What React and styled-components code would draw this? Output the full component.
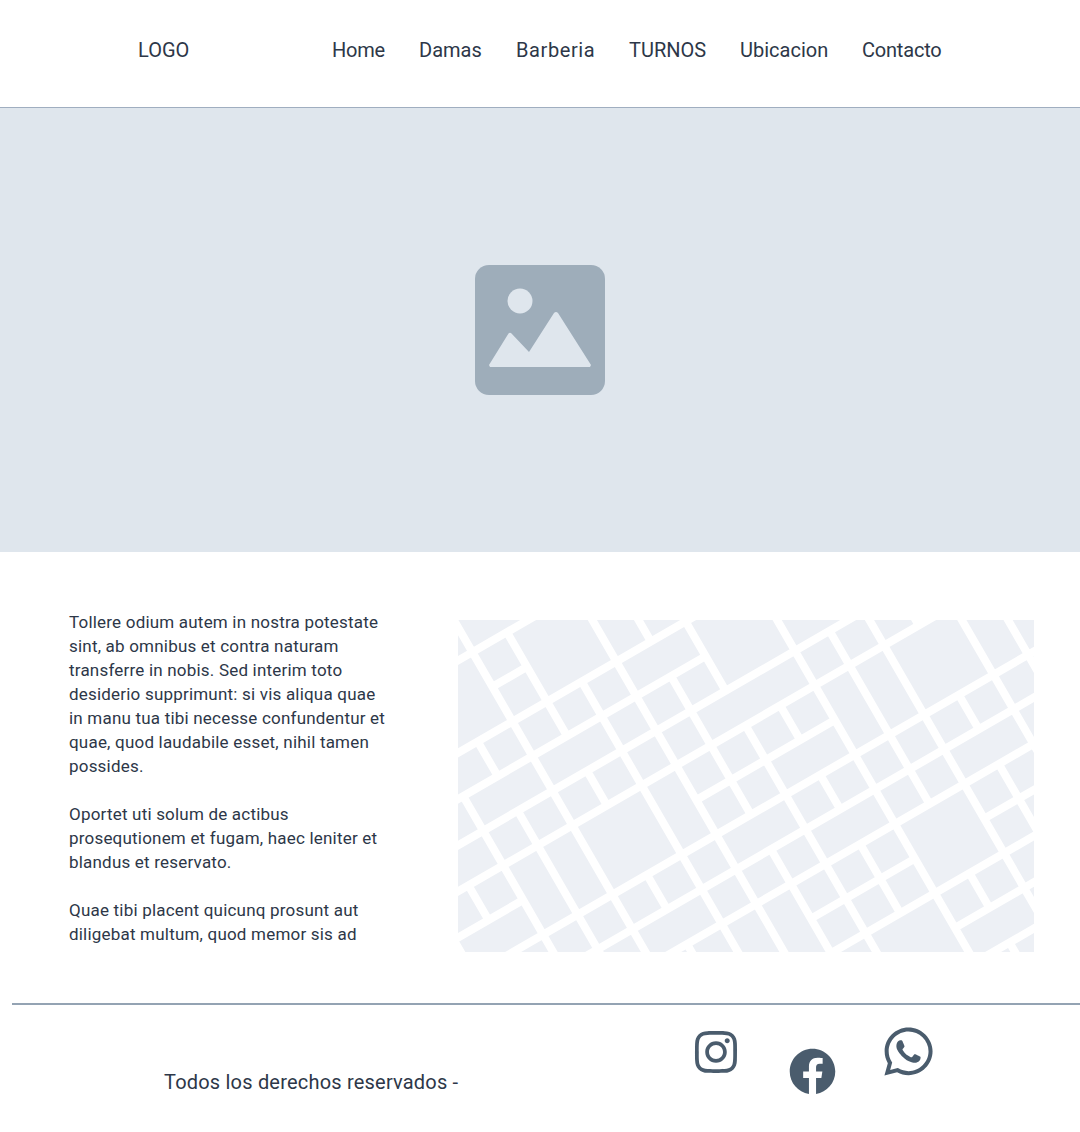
import styled, { createGlobalStyle } from "styled-components";
import { FaFacebook, FaInstagram, FaWhatsapp } from "react-icons/fa";

const GlobalStyle = createGlobalStyle`
    html, body {
        margin: 0;
        padding: 0;
        background: #fff;
    }
    body {
        font-family: Roboto, "Noto Sans", sans-serif;
        color: #2d3748;
    }
`;

const Page = styled.div`
    width: 1080px;
    height: 1132px;
    overflow: hidden;
`;
const Header = styled.header`
    height: 108px;
    border-bottom: 1px solid #a0aec0;
    display: flex;
    align-items: center;
    padding: 0 0 7px 138px;
    box-sizing: border-box;
    font-size: 20px;
`;
const Logo = styled.div`
    width: 194px;
`;
const Nav = styled.nav`
    display: flex;
    gap: 34px;
`;
const NavLink = styled.a`
    color: inherit;
    width: ${(props) => props.width}px;
    letter-spacing: ${(props) => props.spread}px;
    white-space: nowrap;
`;
const Hero = styled.div`
    height: 444px;
    background: #dfe6ed;
    display: flex;
    align-items: center;
    justify-content: center;
`;
const Content = styled.section`
    display: flex;
    padding: 58px 46px 0 69px;
    height: 336px;
    justify-content: space-between;
`;
const Copy = styled.p`
    margin: 0;
    font-size: 17px;
    line-height: 24px;
    letter-spacing: 0.2px;
    white-space: nowrap;
`;
const MapFrame = styled.svg`
    display: block;
    width: 576px;
    height: 332px;
    margin-top: 10px;
    background: #edf0f5;
`;
const Footer = styled.footer`
    margin: 57px 0 0 12px;
    border-top: 2px solid #94a3b3;
    display: flex;
    height: 126px;
`;
const Rights = styled.div`
    margin: 65px 0 0 152px;
    width: 528px;
    font-size: 20px;
    line-height: 24px;
    letter-spacing: 0.2px;
`;
const Socials = styled.div`
    display: flex;
    color: #4a5c6d;
`;
const Social = styled.a`
    display: block;
    width: ${(props) => props.size}px;
    height: ${(props) => props.size}px;
    margin-top: ${(props) => props.top}px;
    margin-right: ${(props) => props.gap}px;
    svg {
        display: block;
        width: 100%;
        height: 100%;
    }
`;

// street map, a regular 40px grid turned by 30 degrees
const FAR = 2000;
const crossRoads = [
    [-77, [[1041, FAR]]],
    [-37, [[1001, 1041]]],
    [3, [[921, FAR]]],
    [43, [[881, 921], [961, FAR]]],
    [83, [[-FAR, FAR]]],
    [123, [[801, 921], [961, 1001], [1081, 1121], [1161, FAR]]],
    [163, [[881, FAR]]],
    [203, [[-FAR, FAR]]],
    [243, [[-FAR, 881], [921, 1081], [1121, FAR]]],
    [283, [[881, 961], [1001, FAR]]],
    [323, [[1001, 1041], [1081, 1121], [1161, 1241]]],
    [363, [[-FAR, FAR]]],
    [403, [[961, 1161], [1241, 1281], [1321, FAR]]],
    [443, [[-FAR, FAR]]],
    [483, [[-FAR, 1001], [1081, 1121], [1161, 1241]]],
    [523, [[-FAR, FAR]]],
    [563, [[-FAR, FAR]]],
];
const longRoads = [
    [801, [[-FAR, FAR]]],
    [841, [[83, 123]]],
    [881, [[-FAR, FAR]]],
    [921, [[-FAR, 283]]],
    [961, [[-FAR, FAR]]],
    [1001, [[-FAR, FAR]]],
    [1041, [[-FAR, 3], [203, 363]]],
    [1081, [[-FAR, FAR]]],
    [1121, [[-FAR, FAR]]],
    [1161, [[-FAR, FAR]]],
    [1201, [[243, 363], [443, FAR]]],
    [1241, [[-FAR, FAR]]],
    [1281, [[363, FAR]]],
    [1321, [[-FAR, FAR]]],
];

const COS = Math.cos(Math.PI / 6);
const SIN = 0.5;
const point = (u, v) => `${(COS * u + SIN * v).toFixed(1)} ${(COS * v - SIN * u).toFixed(1)}`;

const roadPath = () => {
    const parts = [];
    crossRoads.forEach(([u, spans]) =>
        spans.forEach(([a, b]) => parts.push(`M${point(u, a)}L${point(u, b)}`))
    );
    longRoads.forEach(([v, spans]) =>
        spans.forEach(([a, b]) => parts.push(`M${point(a, v)}L${point(b, v)}`))
    );
    return parts.join("");
};

const StreetMap = () => (
    <MapFrame viewBox="458 620 576 332">
        <path d={roadPath()} fill="none" stroke="#fff" strokeWidth="8" />
    </MapFrame>
);

const ImagePlaceholder = () => (
    <svg width="130" height="130" viewBox="0 0 130 130">
        <rect width="130" height="130" rx="14" fill="#9eadba" />
        <circle cx="45" cy="36" r="12.5" fill="#dfe6ed" />
        <path
            d="M15 102 L14 100 L33.500 68.500 Q35 67 36.500 68.500 L54 87 L79 48 Q81 46 83 48 L116 100 L115 102 Z"
            fill="#dfe6ed"
        />
    </svg>
);

const navItems = [
    { label: "Home", width: 53, spread: -0.2 },
    { label: "Damas", width: 63, spread: 0 },
    { label: "Barberia", width: 79, spread: 0.6 },
    { label: "TURNOS", width: 77, spread: 0 },
    { label: "Ubicacion", width: 88, spread: 0 },
    { label: "Contacto", width: 79, spread: -0.2 },
];

const App = () => {
    return (
        <Page>
            <GlobalStyle />
            <Header>
                <Logo>LOGO</Logo>
                <Nav>
                    {navItems.map((item) => (
                        <NavLink key={item.label} width={item.width} spread={item.spread}>
                            {item.label}
                        </NavLink>
                    ))}
                </Nav>
            </Header>
            <Hero>
                <ImagePlaceholder />
            </Hero>
            <Content>
                <Copy>
                    Tollere odium autem in nostra potestate<br />
                    sint, ab omnibus et contra naturam<br />
                    transferre in nobis. Sed interim toto<br />
                    desiderio supprimunt: si vis aliqua quae<br />
                    in manu tua tibi necesse confundentur et<br />
                    quae, quod laudabile esset, nihil tamen<br />
                    possides.<br />
                    <br />
                    Oportet uti solum de actibus<br />
                    prosequtionem et fugam, haec leniter et<br />
                    blandus et reservato.<br />
                    <br />
                    Quae tibi placent quicunq prosunt aut<br />
                    diligebat multum, quod memor sis ad
                </Copy>
                <StreetMap />
            </Content>
            <Footer>
                <Rights>Todos los derechos reservados -</Rights>
                <Socials>
                    <Social size={48} top={23} gap={49}><FaInstagram /></Social>
                    <Social size={47} top={43} gap={45}><FaFacebook /></Social>
                    <Social size={55} top={19} gap={0}><FaWhatsapp /></Social>
                </Socials>
            </Footer>
        </Page>
    );
};

export default App;
